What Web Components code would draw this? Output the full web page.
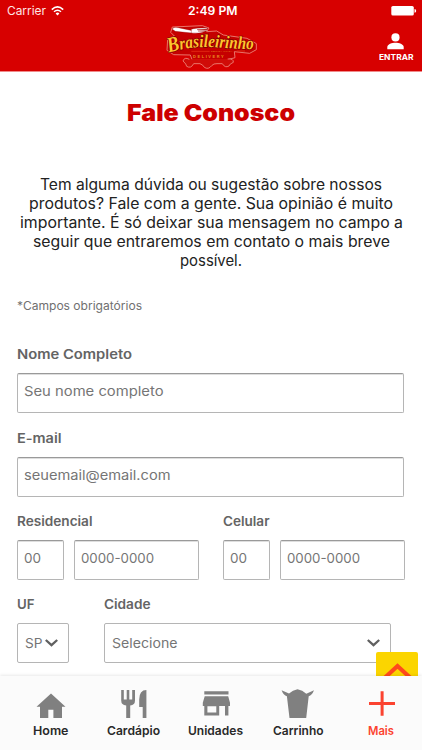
<!DOCTYPE html>
<html lang="pt-BR">
<head>
<meta charset="utf-8">
<meta name="viewport" content="width=device-width, initial-scale=1">
<title>Fale Conosco</title>
<style>
  body{
    margin:0;
    height:750px;
    overflow:hidden;
    background:#fff;
    font-family:Inter, "Open Sans", sans-serif;
  }
</style>
</head>
<body>
<contact-page>
  <app-header slot="header"></app-header>
  <page-intro slot="content"></page-intro>
  <form-row slot="content">
    <form-field label="Nome Completo" label-width="115" style="width:387px">
      <text-box text="Seu nome completo" text-width="139.5"></text-box>
    </form-field>
  </form-row>
  <form-row slot="content">
    <form-field label="E-mail" label-width="44.5" style="width:387px">
      <text-box text="seuemail@email.com" text-width="146.5"></text-box>
    </form-field>
  </form-row>
  <form-row slot="content">
    <form-field label="Residencial" label-width="75.5" style="width:206px">
      <text-box text="00" text-width="17" style="width:47px"></text-box>
      <text-box text="0000-0000" text-width="73" style="width:125px"></text-box>
    </form-field>
    <form-field label="Celular" label-width="46.5" style="width:183px">
      <text-box text="00" text-width="17" style="width:47px"></text-box>
      <text-box text="0000-0000" text-width="73" style="width:125px"></text-box>
    </form-field>
  </form-row>
  <form-row slot="content">
    <form-field label="UF" label-width="17.5" style="width:87px">
      <select-box text="SP" text-width="17.5" style="width:52px;--pad-right:10px"></select-box>
    </form-field>
    <form-field label="Cidade" label-width="46.5" style="width:287px">
      <select-box text="Selecione" text-width="65.5" style="width:287px;--pad-right:10px"></select-box>
    </form-field>
  </form-row>
  <scroll-top slot="overlay"></scroll-top>
  <tab-bar slot="footer"></tab-bar>
</contact-page>

<script>
const makeTemplate = (html) => {
  const template = document.createElement('template');
  template.innerHTML = html;
  return template;
}

class BaseElement extends HTMLElement{
  constructor(template){
    super();
    this.attachShadow({mode: 'open'})
    this.shadowRoot.appendChild(template.content.cloneNode(true))
  }
  find(selector){
    return this.shadowRoot.querySelector(selector)
  }
  // fills the inner fit-text, the width goes last because it triggers the fit
  setText(value, width){
    const text = this.find('fit-text')
    text.textContent = value
    text.setAttribute('width', width)
  }
}

// one line of text stretched to a given width
const fitTextTemplate = makeTemplate(`
 <style>
  :host{
    display:block;
    white-space:nowrap;
    flex:none;
  }
  span{
    display:inline-block;
    transform-origin:0 50%;
  }
 </style>
 <span><slot></slot></span>
`);
class FitText extends BaseElement{
  static get observedAttributes(){
    return ['width']
  }
  constructor(){
    super(fitTextTemplate)
  }
  connectedCallback(){
    this.fit()
  }
  attributeChangedCallback(){
    this.fit()
  }
  fit(){
    const width = Number(this.getAttribute('width'))
    const span = this.find('span')
    span.style.transform = 'none'
    const natural = span.getBoundingClientRect().width
    if(!width || !natural) return
    this.style.width = width + 'px'
    span.style.transform = `scaleX(${width / natural})`
  }
}

const pageTemplate = makeTemplate(`
 <style>
  :host{
    display:flex;
    flex-direction:column;
    height:750px;
    position:relative;
    overflow:hidden;
  }
  main{
    flex:1;
    min-height:0;
    overflow:hidden;
    padding-left:17px;
  }
 </style>
 <slot name="header"></slot>
 <main><slot name="content"></slot></main>
 <slot name="overlay"></slot>
 <slot name="footer"></slot>
`);
class ContactPage extends BaseElement{
  constructor(){
    super(pageTemplate)
  }
}

const headerTemplate = makeTemplate(`
 <style>
  :host{
    display:flex;
    flex-direction:column;
    flex:none;
    box-sizing:border-box;
    height:72px;
    background:#d70000;
    border-bottom:1px solid #f08a8a;
    color:#fff;
  }
  .status{
    display:grid;
    grid-template-columns:1fr auto 1fr;
    align-items:center;
    height:22px;
    padding:0 5px 0 7px;
    font-family:Inter, sans-serif;
    font-size:12px;
    line-height:22px;
  }
  .carrier{
    display:flex;
    align-items:center;
    gap:5px;
    color:#ffe5e5;
  }
  .time{
    font-weight:600;
    margin-left:2px;
  }
  .battery{
    justify-self:end;
  }
  .bar{
    display:grid;
    grid-template-columns:1fr 115px 1fr;
    height:49px;
  }
  .logo{
    margin-top:-7px;
    margin-left:1px;
  }
  .login{
    justify-self:end;
    display:flex;
    flex-direction:column;
    align-items:center;
    padding:11px 9px 0 0;
    font-size:7.6px;
    font-weight:700;
    line-height:10px;
  }
  .login svg{
    margin-bottom:3px;
  }
  svg{
    display:block;
  }
 </style>
 <div class="status">
   <div class="carrier">
     <fit-text width="39">Carrier</fit-text>
     <svg width="13" height="10" viewBox="0 0 13 10" fill="none" stroke="#fff">
       <path d="M.8 3.6Q6.5-1.7 12.2 3.6" stroke-width="1.6"/>
       <path d="M3 5.8Q6.5 2.7 10 5.8" stroke-width="1.5"/>
       <path d="M4.6 7.4Q6.5 5.8 8.4 7.4L6.5 9.4z" fill="#fff" stroke="none"/>
     </svg>
   </div>
   <fit-text class="time" width="49.5">2:49 PM</fit-text>
   <svg class="battery" width="26" height="10" viewBox="0 0 26 10" fill="#fff">
     <rect x="0.3" y="0" width="22.5" height="9.6" rx="1.6"/>
     <path d="M23.5 3q1.7.3 1.7 1.9t-1.7 1.9z"/>
   </svg>
 </div>
 <div class="bar">
   <span></span>
   <svg class="logo" width="115" height="60" viewBox="0 0 345 180">
     <g fill="none" stroke="#ee8b80" stroke-width="2.5" stroke-linejoin="round">
       <path fill="#c50000" d="M36 106L38 72 58 63 47 52 52 36 142 32 162 39 155 50 185 48 205 60 276 70 304 86 304 104 284 115 238 110 240 128 218 134 112 136 106 120 56 119z"/>
       <path fill="#d00c08" d="M103 133Q88 125 84 138 95 148 95 154 108 162 116 146H135Q145 150 148 157 160 165 170 152 176 145 186 146H202Q210 160 222 153 223 147 235 142 236 130 218 132"/>
     </g>
     <g fill="#fff" stroke="#8b0000" stroke-width="1">
       <path d="M51 42Q56 35 70 38L113 47 110 54 61 49z"/>
       <path d="M109 43Q119 38 157 38L157 41 126 44 158 44 157 47 129 48 153 49Q133 57 109 54z"/>
     </g>
     <path id="arc" d="M41 113Q110 92 180 97T302 103" fill="none"/>
     <text font-family="Liberation Serif" font-weight="700" font-style="italic" font-size="54" fill="#ffc52e" stroke="#790000" stroke-width="4" paint-order="stroke"><textPath href="#arc" textLength="256" lengthAdjust="spacingAndGlyphs"><tspan font-size="64">B</tspan>rasileirinho</textPath></text>
     <path d="M109 109H164M245 108H270" stroke="#ed3919" stroke-width="2"/>
     <g font-family="Liberation Sans" fill="#e98a20">
       <text x="168" y="111" font-size="7" font-style="italic" textLength="64">COMIDA TIPICA</text>
       <text x="114" y="129" font-size="12" font-weight="700" textLength="92">DELIVERY</text>
     </g>
   </svg>
   <div class="login">
     <svg width="17" height="17" viewBox="0 0 17 17" fill="#fff">
       <circle cx="8.5" cy="4.4" r="4.1"/>
       <path d="M.3 16.2v-2.3C.3 11.2 5 9.7 8.5 9.7s8.2 1.5 8.2 4.2v2.3z"/>
     </svg>
     <fit-text width="34.5">ENTRAR</fit-text>
   </div>
 </div>
`);
class AppHeader extends BaseElement{
  constructor(){
    super(headerTemplate)
  }
}

const introTemplate = makeTemplate(`
 <style>
  :host{
    display:block;
    width:388px;
    height:274.4px;
    overflow:hidden;
  }
  h1, p{
    margin:0;
    display:flex;
    flex-direction:column;
    align-items:center;
  }
  h1{
    padding-top:26px;
    color:#cd0000;
    font-size:23.4px;
    font-weight:900;
    line-height:30px;
  }
  .text{
    margin-top:47px;
    color:#222;
    font-size:15.2px;
    line-height:19.1px;
  }
  .note{
    margin-top:28px;
    align-items:flex-start;
    color:#707070;
    font-size:11.4px;
    line-height:16px;
  }
 </style>
 <h1><fit-text width="168">Fale Conosco</fit-text></h1>
 <p class="text">
   <fit-text width="342">Tem alguma dúvida ou sugestão sobre nossos</fit-text>
   <fit-text width="364">produtos? Fale com a gente. Sua opinião é muito</fit-text>
   <fit-text width="383">importante. É só deixar sua mensagem no campo a</fit-text>
   <fit-text width="357">seguir que entraremos em contato o mais breve</fit-text>
   <fit-text width="62">possível.</fit-text>
 </p>
 <p class="note"><fit-text width="125">*Campos obrigatórios</fit-text></p>
`);
class PageIntro extends BaseElement{
  constructor(){
    super(introTemplate)
  }
}

const rowTemplate = makeTemplate(`
 <style>
  :host{
    display:flex;
    margin-bottom:16.3px;
  }
 </style>
 <slot></slot>
`);
class FormRow extends BaseElement{
  constructor(){
    super(rowTemplate)
  }
}

const fieldTemplate = makeTemplate(`
 <style>
  :host{
    display:block;
    flex:none;
  }
  label{
    display:block;
    height:18px;
    margin-bottom:9px;
    color:#646464;
    font-size:12.9px;
    font-weight:600;
    line-height:18px;
  }
  .controls{
    display:flex;
    gap:10px;
  }
  ::slotted(text-box:only-child){
    flex:1;
  }
 </style>
 <label><fit-text></fit-text></label>
 <div class="controls"><slot></slot></div>
`);
class FormField extends BaseElement{
  constructor(){
    super(fieldTemplate)
  }
  connectedCallback(){
    this.setText(this.getAttribute('label'), this.getAttribute('label-width'))
  }
}

const boxStyle = `
  :host{
    display:flex;
    box-sizing:border-box;
    height:40px;
    border:1px solid #b5b5b5;
    border-radius:2px;
    background:#fff;
    color:#757575;
    font-size:13.4px;
  }
`;
const textBoxTemplate = makeTemplate(`
 <style>
  ${boxStyle}
  :host{
    padding:0 6px;
    line-height:35px;
    border-top-color:#9a9a9a;
    box-shadow:inset 0 1px 0 #dedede;
  }
 </style>
 <fit-text></fit-text>
`);
const selectBoxTemplate = makeTemplate(`
 <style>
  ${boxStyle}
  :host{
    align-items:center;
    justify-content:space-between;
    padding:0 var(--pad-right) 0 7px;
    line-height:38px;
  }
  svg{
    flex:none;
  }
 </style>
 <fit-text></fit-text>
 <svg width="13" height="8" viewBox="0 0 13 8" fill="none" stroke="#606060" stroke-width="2.3"><path d="M.8 1L6.5 6.2 12.2 1"/></svg>
`);
class TextBox extends BaseElement{
  constructor(template = textBoxTemplate){
    super(template)
  }
  connectedCallback(){
    this.setText(this.getAttribute('text'), this.getAttribute('text-width'))
  }
}
class SelectBox extends TextBox{
  constructor(){
    super(selectBoxTemplate)
  }
}

// button that sits over the form, half hidden by the tab bar
const scrollTopTemplate = makeTemplate(`
 <style>
  :host{
    position:absolute;
    right:4px;
    bottom:56px;
    width:42px;
    height:42px;
    border-radius:2px;
    background:#fbd500;
  }
 </style>
 <svg width="42" height="42" viewBox="0 0 42 42" fill="none" stroke="#ff4a1c" stroke-width="4.2"><path d="M8.5 26L21.5 14 34.5 26"/></svg>
`);
class ScrollTop extends BaseElement{
  constructor(){
    super(scrollTopTemplate)
  }
}

const tabBarTemplate = makeTemplate(`
 <style>
  :host{
    display:grid;
    grid-template-columns:repeat(5, 1fr);
    flex:none;
    position:relative;
    box-sizing:border-box;
    height:74px;
    padding-left:10px;
    background:#fbfbfb;
    box-shadow:0 -1px 3px rgba(0,0,0,.09);
  }
 </style>
 <tab-item label="Home" label-width="35.5">
   <svg width="40" height="32" viewBox="0 0 40 32"><path d="M20 5.5L34.5 18.7H31V30H22.4V21.8H17.3V30H9V18.7H5.5z"/></svg>
 </tab-item>
 <tab-item label="Cardápio" label-width="53">
   <svg width="40" height="32" viewBox="0 0 40 32"><path d="M7.2 2H9.8V11.5H12.7V2H15.3V11.5H18.2V2H21V12.5Q21 17 16.2 17.5V30H12.2V17.5Q7.2 17 7.2 12.5zM32.4 2V30H28.7V19H25.2V11.5Q25.2 2 32.4 2z"/></svg>
 </tab-item>
 <tab-item label="Unidades" label-width="55">
   <svg width="40" height="32" viewBox="0 0 40 32"><path fill-rule="evenodd" d="M8.3 3.3H32.5V6.6H8.3zM8.7 8.2H32.2L34 14.8V18H32.4V27.5H29V18H23.2V27.5H8.3V18H6.8V14.8zM11.4 18.2V24.5H20.3V18.2z"/></svg>
 </tab-item>
 <tab-item label="Carrinho" label-width="50.5">
   <svg width="40" height="32" viewBox="0 0 40 32"><path d="M3.6 2.2L11 5.5 15 2.8 19.5 1.3 24.2 2.8 28.3 5.7 36 2.2Q34 7.3 30.7 8.2L28.2 30H11.5L8.9 8.2Q5.4 7.2 3.6 2.2z"/></svg>
 </tab-item>
 <tab-item label="Mais" label-width="26" style="--icon:#fb4330;--label:#fb4330">
   <svg width="40" height="32" viewBox="0 0 40 32"><path d="M19.6 3.2H22.6V14H34V17H22.6V27.7H19.6V17H8V14H19.6z"/></svg>
 </tab-item>
`);
class TabBar extends BaseElement{
  constructor(){
    super(tabBarTemplate)
  }
}

const tabItemTemplate = makeTemplate(`
 <style>
  :host{
    display:flex;
    flex-direction:column;
    align-items:center;
    padding-top:12px;
    color:var(--label, #292929);
    font-size:12px;
    font-weight:600;
    line-height:19px;
  }
  ::slotted(svg){
    display:block;
    margin-bottom:1px;
    fill:var(--icon, #808080);
  }
 </style>
 <slot></slot>
 <fit-text></fit-text>
`);
class TabItem extends BaseElement{
  constructor(){
    super(tabItemTemplate)
  }
  connectedCallback(){
    this.setText(this.getAttribute('label'), this.getAttribute('label-width'))
  }
}

window.customElements.define('fit-text', FitText)
window.customElements.define('contact-page', ContactPage)
window.customElements.define('app-header', AppHeader)
window.customElements.define('page-intro', PageIntro)
window.customElements.define('form-row', FormRow)
window.customElements.define('form-field', FormField)
window.customElements.define('text-box', TextBox)
window.customElements.define('select-box', SelectBox)
window.customElements.define('scroll-top', ScrollTop)
window.customElements.define('tab-item', TabItem)
window.customElements.define('tab-bar', TabBar)
</script>
</body>
</html>
